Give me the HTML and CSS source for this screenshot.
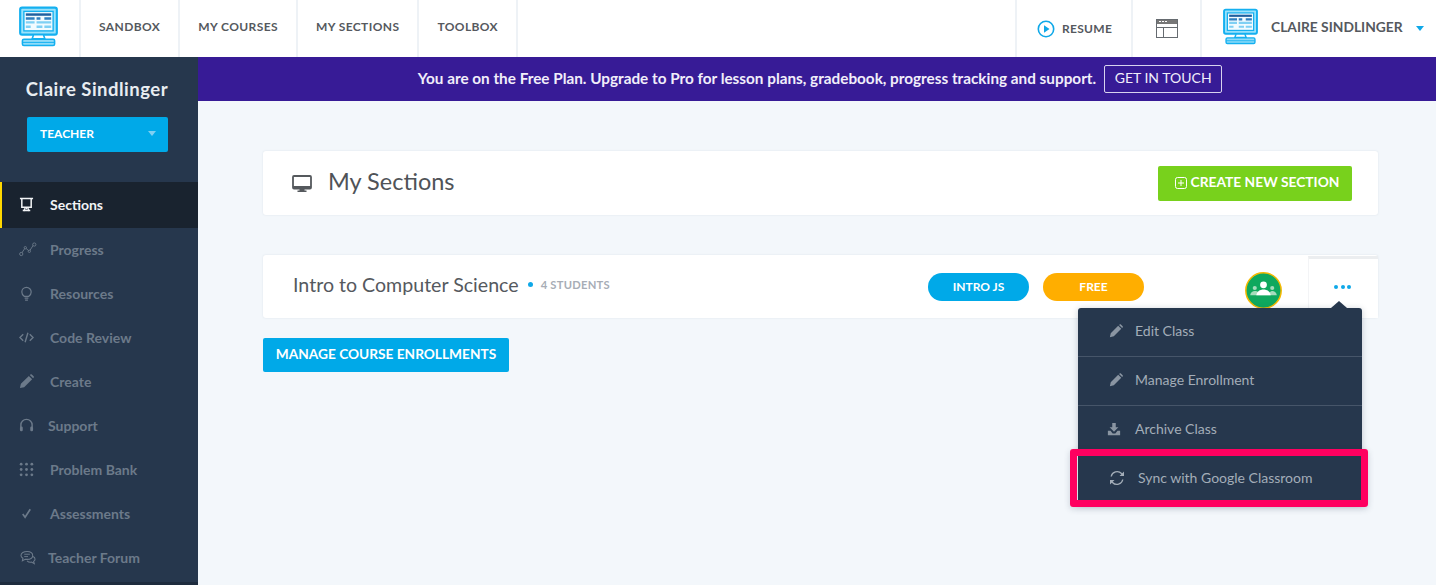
FILE: index.html
```html
<!DOCTYPE html>
<html lang="en">
<head>
<meta charset="utf-8">
<title>My Sections</title>
<link rel="stylesheet" href="styles.css">
</head>
<body>
<svg class="defs" width="0" height="0" aria-hidden="true">
  <symbol id="monitor" viewBox="0 0 40 41">
    <rect x="1.200" y="1.200" width="37.600" height="27.600" rx="2" fill="#9be2fb" stroke="#14b0f0" stroke-width="2.200"/>
    <rect x="5" y="5" width="30" height="20" fill="#f2fbff" stroke="#14b0f0" stroke-width="1.400"/>
    <path d="M7 7h26v2.500H7z" fill="#1f5f9f"/>
    <path d="M7 11h9v2.500H7zM18 11h4v2.500h-4zM26 11h7v2.500h-7z" fill="#2f7fc0"/>
    <path d="M7 15h9v2.500H7zM18 15h15v2.500H18zM7 19.500h5v2.500H7zM18 19.500h6v2.500h-6zM26 19.500h7v2.500h-7z" fill="#7fd0f4"/>
    <path d="M15 29h10l1.500 4h-13z" fill="#fff" stroke="#14b0f0" stroke-width="1.600"/>
    <rect x="3.500" y="33.500" width="33" height="6.500" rx="1.500" fill="#8fdcf9" stroke="#14b0f0" stroke-width="1.600"/>
    <path d="M4 36.800h32" stroke="#14b0f0"/>
  </symbol>
  <symbol id="pencil" viewBox="0 0 16 16">
    <path d="M1 15l1-4.500L10.500 2l3.500 3.500L5.500 14zM11.500 1l.7-.5c.5-.4 1-.4 1.400 0l2 2c.4.400.4.900 0 1.400l-.6.600z" fill="currentColor"/>
  </symbol>
</svg>

<header class="topbar">
  <a class="logo-cell"><svg class="logo"><use href="#monitor"/></svg></a>
  <nav class="topnav">
    <a class="topnav-item">SANDBOX</a>
    <a class="topnav-item">MY COURSES</a>
    <a class="topnav-item">MY SECTIONS</a>
    <a class="topnav-item">TOOLBOX</a>
  </nav>
  <div class="top-right">
    <a class="resume">
      <svg class="resume-icon" viewBox="0 0 18 18"><circle cx="9" cy="9" r="7.700" fill="none" stroke="#0fa8e8" stroke-width="1.600"/><path d="M7 5.200l5.500 3.800L7 12.800z" fill="#0fa8e8"/></svg>
      RESUME
    </a>
    <a class="window-cell">
      <svg class="window-icon" viewBox="0 0 22 19"><rect x=".5" y=".5" width="21" height="18" fill="#fff" stroke="#666b70"/><path d="M1 1h20v4H1z" fill="#777"/><path d="M3 2.500h2M6 2.500h2M9 2.500h2" stroke="#fff"/><path d="M1 8.500h20M7.500 8.500V18" stroke="#666b70" fill="none"/></svg>
    </a>
    <a class="user-cell">
      <svg class="user-logo"><use href="#monitor"/></svg>
      <span class="user-name">CLAIRE SINDLINGER</span>
      <span class="caret caret-blue"></span>
    </a>
  </div>
</header>

<div class="body-row">
  <aside class="sidebar">
    <div class="profile-name">Claire Sindlinger</div>
    <button class="role-btn"><span>TEACHER</span><span class="caret caret-pale"></span></button>
    <ul class="side-nav">
      <li class="side-item active">
        <svg class="side-icon" viewBox="0 0 16 16"><path d="M1 1.500h14M3 2v9h10V2M8 11v2M5 15l1.500-3M11 15l-1.500-3M4 14.500h8" fill="none" stroke="currentColor" stroke-width="1.600"/></svg>
        <span>Sections</span>
      </li>
      <li class="side-item">
        <svg class="side-icon wide" viewBox="0 0 20 16"><path d="M3 12L7 6l4.500 4L16 3" fill="none" stroke="currentColor"/><circle cx="2.500" cy="13" r="1.800" fill="#26374d" stroke="currentColor"/><circle cx="7" cy="6" r="1.300" fill="#26374d" stroke="currentColor"/><circle cx="11.500" cy="10" r="1.300" fill="#26374d" stroke="currentColor"/><circle cx="17" cy="2.500" r="1.800" fill="#26374d" stroke="currentColor"/></svg>
        <span>Progress</span>
      </li>
      <li class="side-item">
        <svg class="side-icon" viewBox="0 0 16 16"><path d="M5.500 11C3.500 9.500 3 8 3 6.500a5 5 0 0110 0c0 1.500-.5 3-2.500 4.500zM6 13h4M6.500 15h3" fill="none" stroke="currentColor" stroke-width="1.300"/></svg>
        <span>Resources</span>
      </li>
      <li class="side-item">
        <svg class="side-icon" viewBox="0 0 16 16"><path d="M4.500 4.500L1 8l3.500 3.500M11.500 4.500L15 8l-3.500 3.500M9.500 3l-3 10" fill="none" stroke="currentColor" stroke-width="1.500"/></svg>
        <span>Code Review</span>
      </li>
      <li class="side-item">
        <svg class="side-icon"><use href="#pencil"/></svg>
        <span>Create</span>
      </li>
      <li class="side-item tight">
        <svg class="side-icon" viewBox="0 0 16 16"><path d="M2 10V7.500a6 6 0 0112 0V10" fill="none" stroke="currentColor" stroke-width="1.500"/><rect x="1" y="9" width="3" height="5" rx="1.300" fill="currentColor"/><rect x="12" y="9" width="3" height="5" rx="1.300" fill="currentColor"/></svg>
        <span>Support</span>
      </li>
      <li class="side-item">
        <svg class="side-icon" viewBox="0 0 14 14" fill="currentColor"><circle cx="2" cy="2" r="1.300"/><circle cx="7" cy="2" r="1.300"/><circle cx="12" cy="2" r="1.300"/><circle cx="2" cy="7" r="1.300"/><circle cx="7" cy="7" r="1.300"/><circle cx="12" cy="7" r="1.300"/><circle cx="2" cy="12" r="1.300"/><circle cx="7" cy="12" r="1.300"/><circle cx="12" cy="12" r="1.300"/></svg>
        <span>Problem Bank</span>
      </li>
      <li class="side-item">
        <svg class="side-icon" viewBox="0 0 16 16"><path d="M4 8.500l2.500 3.500L12 3.500" fill="none" stroke="currentColor" stroke-width="1.800"/></svg>
        <span>Assessments</span>
      </li>
      <li class="side-item tight">
        <svg class="side-icon wide" viewBox="0 0 18 16"><path d="M8 1.500c3.500 0 6 1.800 6 4.300s-2.500 4.200-6 4.200c-.7 0-1.300 0-2-.2L3 11.500l.6-2.700C2.300 8 1.500 7 1.500 5.800 1.500 3.300 4.500 1.500 8 1.500z" fill="none" stroke="currentColor" stroke-width="1.100"/><path d="M14.500 7c1.300.7 2 1.700 2 2.800 0 1-.6 1.800-1.500 2.400l.7 2.300-3-1.600c-1.800.2-3.500-.2-4.700-1.400" fill="none" stroke="currentColor" stroke-width="1.100"/><path d="M5 4.500h6M5 7h4" stroke="currentColor"/></svg>
        <span>Teacher Forum</span>
      </li>
    </ul>
  </aside>

  <main class="content">
    <div class="banner">
      <span>You are on the Free Plan. Upgrade to Pro for lesson plans, gradebook, progress tracking and support.</span>
      <a class="banner-btn">GET IN TOUCH</a>
    </div>
    <div class="main-inner">
      <section class="card head-card">
        <div class="head-title">
          <svg class="head-icon" viewBox="0 0 20 17"><path d="M2 1h16a1 1 0 011 1v10.500a1 1 0 01-1 1H2a1 1 0 01-1-1V2a1 1 0 011-1z" fill="#fff" stroke="#55595d" stroke-width="1.800"/><path d="M1 11h18v2.500H1zM7.500 13.500h5v2h2V17h-9v-1.500h2z" fill="#55595d"/></svg>
          <h1>My Sections</h1>
        </div>
        <button class="create-btn">
          <svg class="plus-icon" viewBox="0 0 12 12"><rect x=".5" y=".5" width="11" height="11" rx="2" fill="none" stroke="#fff"/><path d="M6 3v6M3 6h6" stroke="#fff"/></svg>
          <span>CREATE NEW SECTION</span>
        </button>
      </section>

      <section class="card class-card">
        <div class="class-info">
          <span class="class-name">Intro to Computer Science</span>
          <span class="dot"></span>
          <span class="students">4 STUDENTS</span>
        </div>
        <span class="pill pill-blue">INTRO JS</span>
        <span class="pill pill-orange">FREE</span>
        <svg class="classroom" viewBox="0 0 36 36">
          <circle cx="18" cy="18" r="17.200" fill="#0fa85e" stroke="#f5b800" stroke-width="1.500"/>
          <circle cx="18" cy="12.500" r="3.300" fill="#fff"/>
          <circle cx="9.500" cy="15.500" r="2" fill="#a5dcbc"/>
          <circle cx="26.500" cy="15.500" r="2" fill="#a5dcbc"/>
          <path d="M5 22.500c.5-3 2.500-4 4.500-4s3 .5 3.500 1.500L24 20c.5-1 1.500-1.500 2.500-1.500 2 0 4 1 4.500 4z" fill="#a5dcbc"/>
          <path d="M11 22.500c.5-3.500 3.500-5.500 7-5.500s6.500 2 7 5.500z" fill="#fff"/>
        </svg>
        <div class="more-cell">
          <span class="more-dots"><i></i><i></i><i></i></span>
          <div class="menu">
            <span class="menu-arrow"></span>
            <a class="menu-item">
              <svg class="menu-icon"><use href="#pencil"/></svg><span>Edit Class</span>
            </a>
            <a class="menu-item">
              <svg class="menu-icon"><use href="#pencil"/></svg><span>Manage Enrollment</span>
            </a>
            <a class="menu-item archive">
              <svg class="menu-icon" viewBox="0 0 16 16"><path d="M6 1h4v5h3L8 11 3 6h3zM1 10h3l2.500 3h3L12 10h3v5H1z" fill="currentColor"/></svg><span>Archive Class</span>
            </a>
            <a class="menu-item sync">
              <svg class="menu-icon" viewBox="0 0 16 16"><path d="M2.200 6.500A6 6 0 0112.500 3.500L14 5M13.800 9.500A6 6 0 013.500 12.500L2 11" fill="none" stroke="currentColor" stroke-width="1.300"/><path d="M15 1.500V6h-4.500zM1 14.500V10h4.500z" fill="currentColor"/></svg><span>Sync with Google Classroom</span>
            </a>
            <div class="highlight"></div>
          </div>
        </div>
      </section>

      <button class="manage-btn"><span>MANAGE COURSE ENROLLMENTS</span></button>
    </div>
  </main>
</div>
</body>
</html>
```
FILE: styles.css
```css
* { box-sizing: border-box; }
html, body { margin: 0; height: 585px; overflow: hidden; }
body { font-family: Lato, "Open Sans", sans-serif; background: #f3f7fb; color: #4a4e53; }
.defs { position: absolute; }
a { color: inherit; text-decoration: none; }
button { font-family: inherit; border: 0; cursor: pointer; }

.topbar { display: flex; height: 57px; background: #fff; }
.logo-cell { width: 81px; padding: 6px 0 0 19px; border-right: 2px solid #eef2f6; }
.logo { display: block; width: 39px; height: 41px; }
.topnav { display: flex; }
.topnav-item { display: flex; align-items: center; padding: 0 18px 5px; border-right: 2px solid #eef2f6; font-size: 12px; font-weight: 700; letter-spacing: .4px; color: #55595e; }
.top-right { display: flex; margin-left: auto; }
.resume { display: flex; align-items: center; width: 116px; padding-left: 20px; gap: 7px; border-left: 2px solid #eef2f6; font-size: 12px; font-weight: 700; letter-spacing: .3px; color: #55595e; }
.resume-icon { width: 18px; height: 18px; }
.window-cell { display: flex; align-items: center; justify-content: center; width: 69px; border-left: 2px solid #eef2f6; }
.window-icon { width: 22px; height: 19px; }
.user-cell { display: flex; align-items: center; width: 236px; padding-left: 21px; border-left: 2px solid #eef2f6; }
.user-logo { width: 35px; height: 37px; margin-top: -4px; }
.user-name { margin-left: 13px; font-size: 13.800px; font-weight: 700; color: #55595e; padding-bottom: 5px; }
.caret { display: block; width: 0; height: 0; border-left: 4px solid transparent; border-right: 4px solid transparent; border-top: 5px solid; }
.caret-blue { color: #0fa8e8; margin-left: 13px; }
.caret-pale { color: #7fd0f2; }

.body-row { display: flex; height: 528px; }
.sidebar { width: 198px; flex: none; background: #26374d; border-bottom: 3px solid #1e2c3e; overflow: hidden; }
.profile-name { margin-top: 21px; padding-right: 4px; text-align: center; font-size: 18.500px; font-weight: 700; letter-spacing: .5px; color: #e9edf1; line-height: 22px; }
.role-btn { display: flex; align-items: center; justify-content: space-between; width: 141px; height: 35px; margin: 17px 0 0 27px; padding: 0 12px 2px 13px; background: #00a9e8; color: #fff; font-size: 12px; font-weight: 700; border-radius: 2px; }
.side-nav { list-style: none; margin: 30px 0 0; padding: 0; }
.side-item { display: flex; align-items: center; height: 44px; padding: 0 0 2px 19px; gap: 16px; font-size: 14px; font-weight: 700; color: #6c7a8a; }
.side-item.tight { gap: 14px; }
.side-item.active { height: 46px; background: #19232f; color: #f2f4f6; border-left: 2px solid #ffd800; padding-left: 17px; }
.side-icon { width: 15px; height: 15px; flex: none; }
.side-icon.wide { width: 18px; margin-right: -3px; }

.content { flex: 1; min-width: 0; }
.banner { display: flex; align-items: center; justify-content: center; gap: 8px; height: 44px; padding: 0 0 3px 6px; background: #371b96; color: #f1eefa; font-size: 15.300px; font-weight: 700; }
.banner-btn { display: flex; align-items: center; justify-content: center; width: 118px; height: 28px; margin-top: 3px; padding-bottom: 3px; border: 1px solid #d8d3ee; border-radius: 2px; font-size: 14px; font-weight: 400; }
.main-inner { padding: 50px 58px 0 65px; }
.card { display: flex; align-items: center; background: #fff; border-radius: 3px; box-shadow: 0 0 2px rgba(120,140,160,.2); }
.head-card { justify-content: space-between; height: 64px; padding: 0 26px 0 29px; }
.head-title { display: flex; align-items: center; gap: 16px; }
.head-icon { width: 20px; height: 17px; }
h1 { margin: 0; font-size: 23.500px; font-weight: 400; color: #4f5358; padding-bottom: 5px; }
.create-btn { display: flex; align-items: center; justify-content: center; gap: 4px; width: 194px; height: 35px; padding: 0 0 0 4px; background: #78d11c; color: #fff; font-size: 13.800px; font-weight: 700; border-radius: 2px; }
.create-btn span { padding-bottom: 3px; }
.plus-icon { width: 12px; height: 12px; }
.class-card { position: relative; height: 63px; margin-top: 40px; padding-left: 30px; }
.class-info { display: flex; align-items: center; width: 635px; padding-bottom: 5px; }
.class-name { font-size: 19.600px; font-weight: 400; color: #55595e; }
.dot { width: 5px; height: 5px; margin: 0 8px 0 9px; border-radius: 50%; background: #0fa8e8; }
.students { font-size: 11.200px; font-weight: 700; letter-spacing: .25px; color: #a7adb6; }
.pill { display: flex; align-items: center; justify-content: center; width: 101px; height: 28px; padding-bottom: 2px; border-radius: 14px; color: #fff; font-size: 12px; font-weight: 700; margin-top: 1px; }
.pill-blue { background: #00a9e8; margin-right: 14px; }
.pill-orange { background: #ffae00; }
.classroom { width: 37px; height: 37px; margin-left: 101px; margin-top: 8px; }
.more-cell { position: absolute; top: 1px; right: 0; width: 70px; height: 62px; background: #fff; border-top: 3px solid #eceef0; border-left: 1px solid #f3f4f6; display: flex; justify-content: center; }
.more-dots { display: flex; gap: 2.500px; margin-top: 26px; height: 4px; margin-right: 2px; }
.more-dots i { display: block; width: 4px; height: 4px; border-radius: 50%; background: #0fa8e8; }
.menu { position: absolute; top: 49px; right: 16px; width: 284px; background: #26374d; border-radius: 3px; box-shadow: 0 1px 6px rgba(40,60,80,.25); }
.menu-arrow { position: absolute; top: -7px; right: 15px; width: 0; height: 0; border-left: 8px solid transparent; border-right: 8px solid transparent; border-bottom: 7px solid #26374d; }
.menu-item { display: flex; align-items: center; height: 49px; padding: 0 0 3px 31px; gap: 12px; font-size: 14px; color: #a3adb8; border-bottom: 1px solid #465569; }
.menu-item.archive { padding: 0 0 4px 29px; gap: 14px; border-bottom: 0; }
.menu-item.sync { padding: 0 0 4px 31px; gap: 13px; border-bottom: 0; }
.menu-icon { width: 14px; height: 14px; flex: none; color: #8a95a2; }
.sync .menu-icon { width: 16px; height: 16px; color: #a3adb8; }
.highlight { position: absolute; left: -8px; right: -6px; bottom: -3px; height: 58px; border: 7px solid #ff0060; border-radius: 3px; box-shadow: 0 2px 6px rgba(40,60,80,.2); pointer-events: none; }
.manage-btn { display: block; width: 246px; height: 34px; margin-top: 20px; padding: 0 0 3px; background: #00a9e8; color: #fff; font-size: 13.700px; font-weight: 700; border-radius: 2px; }
```
